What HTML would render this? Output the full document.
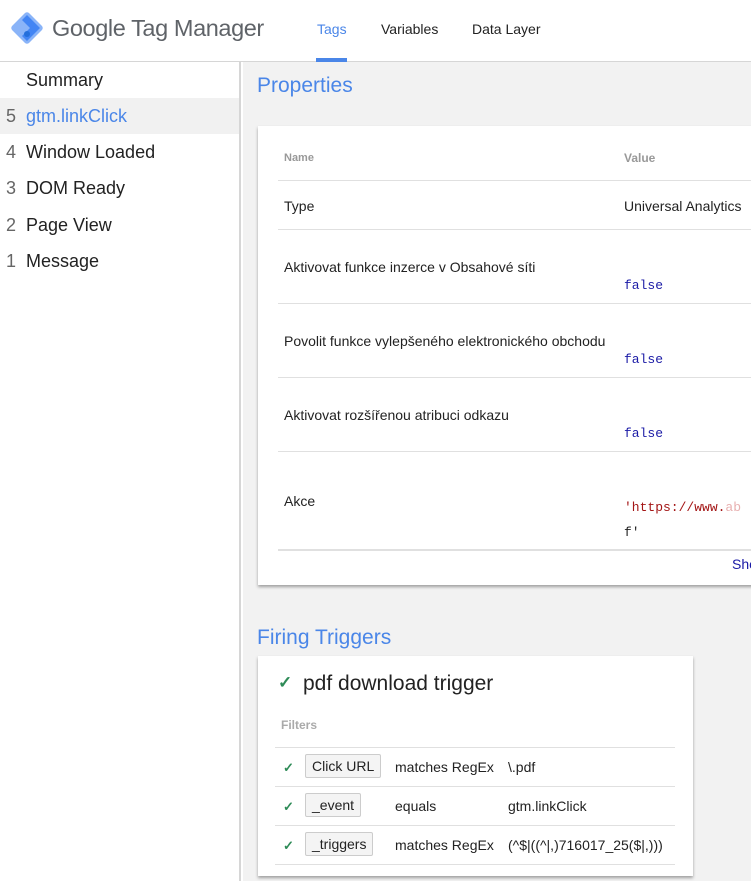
<!DOCTYPE html>
<html><head><meta charset="utf-8"><style>
*{box-sizing:border-box;margin:0;padding:0}
body{width:751px;height:881px;overflow:hidden;font-family:"Liberation Sans",Arial,sans-serif;background:#fff;position:relative}
.hdr{position:absolute;left:0;top:0;width:751px;height:62px;background:#fff;border-bottom:1px solid #d6d6d6}
.logo{position:absolute;left:52px;top:15px;font-size:23.5px;color:#5f6368;letter-spacing:-0.4px}
.nav{position:absolute;top:21px;font-size:14px;color:#222}
.side{position:absolute;left:0;top:62px;width:241px;height:819px;background:#fff;border-right:2px solid #d6d6d6}
.si{position:absolute;left:0;width:239px;height:36px;font-size:18px;color:#222;line-height:36px}
.si b{font-weight:normal;color:#666;position:absolute;left:6px}
.si span{position:absolute;left:26px}
.main{position:absolute;left:243px;top:62px;width:508px;height:819px;background:#f2f2f2}
h2{position:absolute;font-weight:normal;font-size:21px;color:#4a86e8}
.card{position:absolute;background:#fff;box-shadow:0 2px 3px rgba(0,0,0,.35)}
.t{position:absolute;font-size:14px;color:#222;white-space:nowrap}
.ln{position:absolute;height:1px;background:#e0e0e0}
.mono{font-family:"Liberation Mono",monospace;font-size:13px;color:#1a1aa6}
.btn{position:absolute;height:24px;border:1px solid #ccc;border-radius:2px;background:#f4f4f4;font-size:14px;line-height:22px;padding:0 6px;color:#222}
.ck{position:absolute;color:#2e8b57;font-size:13px;font-weight:bold}
</style></head><body>
<div class="hdr">
<svg style="position:absolute;left:10px;top:11px" width="34" height="34" viewBox="0 0 34 34"><rect x="5" y="5" width="24" height="24" rx="3" transform="rotate(45 17 17)" fill="#8ab4f8"/><path d="M17 4 L30 17 L17 30 L12 25 L20 17 L12 9Z" fill="#4285f4"/><circle cx="17" cy="23" r="3" fill="#246fdb"/></svg>
<div class="logo">Google Tag Manager</div>
<div class="nav" style="left:317px;color:#4a86e8">Tags</div>
<div style="position:absolute;left:316px;top:58px;width:31px;height:4px;background:#4a86e8"></div>
<div class="nav" style="left:381px">Variables</div>
<div class="nav" style="left:472px">Data Layer</div>
</div>
<div class="side">
<div class="si" style="top:0"><span>Summary</span></div>
<div class="si" style="top:36px;background:#f1f1f1"><b>5</b><span style="color:#4a86e8">gtm.linkClick</span></div>
<div class="si" style="top:72px"><b>4</b><span>Window Loaded</span></div>
<div class="si" style="top:108px"><b>3</b><span>DOM Ready</span></div>
<div class="si" style="top:145px"><b>2</b><span>Page View</span></div>
<div class="si" style="top:181px"><b>1</b><span>Message</span></div>
</div>
<div class="main">
<h2 style="left:14px;top:12px">Properties</h2>
<div class="card" style="left:15px;top:64px;width:520px;height:459px">
<div class="t" style="left:26px;top:26px;font-size:11px;font-weight:bold;color:#999">Name</div>
<div class="t" style="left:366px;top:25px;font-size:12px;font-weight:bold;color:#999">Value</div>
<div class="ln" style="left:20px;top:54px;width:500px"></div>
<div class="t" style="left:26px;top:72px">Type</div>
<div class="t" style="left:366px;top:72px">Universal Analytics</div>
<div class="ln" style="left:20px;top:103px;width:500px"></div>
<div class="t" style="left:26px;top:133px">Aktivovat funkce inzerce v Obsahové síti</div>
<div class="t mono" style="left:366px;top:152px">false</div>
<div class="ln" style="left:20px;top:177px;width:500px"></div>
<div class="t" style="left:26px;top:207px">Povolit funkce vylepšeného elektronického obchodu</div>
<div class="t mono" style="left:366px;top:226px">false</div>
<div class="ln" style="left:20px;top:251px;width:500px"></div>
<div class="t" style="left:26px;top:281px">Aktivovat rozšířenou atribuci odkazu</div>
<div class="t mono" style="left:366px;top:300px">false</div>
<div class="ln" style="left:20px;top:325px;width:500px"></div>
<div class="t" style="left:26px;top:367px">Akce</div>
<div class="t mono" style="left:366px;top:374px;color:#a31515">'https://www.<span style="color:#e8b0b0">ab</span></div>
<div class="t mono" style="left:366px;top:399px;color:#222">f'</div>
<div class="ln" style="left:20px;top:423px;width:500px;height:2px"></div>
<div class="t" style="left:474px;top:430px;color:#1a1aa6">Show</div>
</div>
<h2 style="left:14px;top:564px">Firing Triggers</h2>
<div class="card" style="left:15px;top:594px;width:435px;height:220px">
<div class="ck" style="left:20px;top:17px;font-size:17px">✓</div>
<div class="t" style="left:45px;top:16px;font-size:21px">pdf download trigger</div>
<div class="t" style="left:23px;top:62px;font-size:12px;font-weight:bold;color:#aaa">Filters</div>
<div class="ln" style="left:17px;top:91px;width:400px"></div>
<div class="ck" style="left:25px;top:104px">✓</div>
<div class="btn" style="left:47px;top:98px">Click URL</div>
<div class="t" style="left:137px;top:103px">matches RegEx</div>
<div class="t" style="left:250px;top:103px">\.pdf</div>
<div class="ln" style="left:17px;top:130px;width:400px"></div>
<div class="ck" style="left:25px;top:143px">✓</div>
<div class="btn" style="left:47px;top:137px">_event</div>
<div class="t" style="left:137px;top:142px">equals</div>
<div class="t" style="left:250px;top:142px">gtm.linkClick</div>
<div class="ln" style="left:17px;top:169px;width:400px"></div>
<div class="ck" style="left:25px;top:182px">✓</div>
<div class="btn" style="left:47px;top:176px">_triggers</div>
<div class="t" style="left:137px;top:181px">matches RegEx</div>
<div class="t" style="left:250px;top:181px">(^$|((^|,)716017_25($|,)))</div>
<div class="ln" style="left:17px;top:208px;width:400px"></div>
</div>
</div>
</body></html>
